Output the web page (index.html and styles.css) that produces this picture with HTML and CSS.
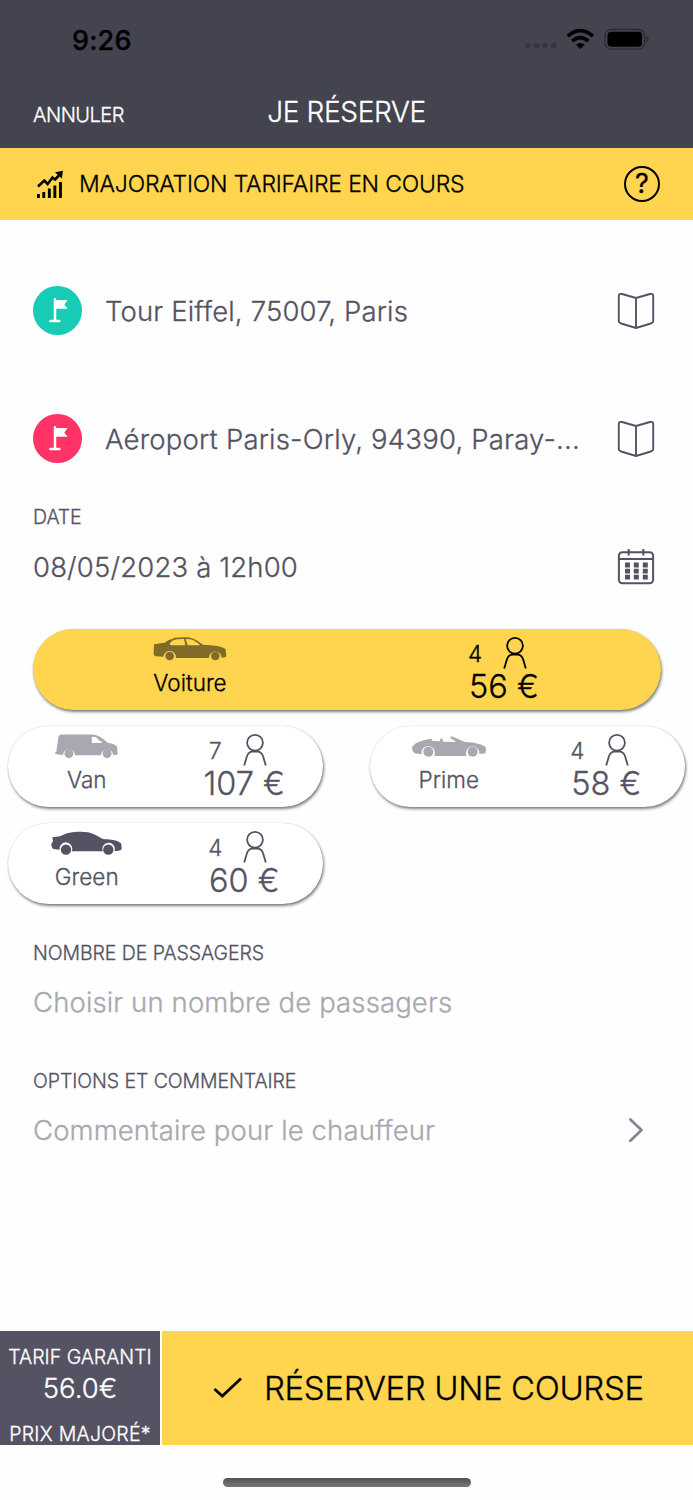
FILE: index.html
```html
<!DOCTYPE html>
<html lang="fr">
<head>
<meta charset="utf-8">
<title>Je réserve</title>
<link rel="stylesheet" href="styles.css">
</head>
<body>
<svg class="defs" width="0" height="0" aria-hidden="true">
  <symbol id="flag" viewBox="0 0 49 49"><path d="M22 13.200V35M17.300 34.900h9" stroke="#fff" stroke-width="2.500" stroke-linecap="round" fill="none"/><path d="M21 14h13.600l-3.300 4.400 3.300 4.400H21z" fill="#fff"/></symbol>
  <symbol id="book" viewBox="0 0 38 38"><path d="M19 6 5 2Q1.800 1.200 1.800 4.200V28.800Q1.800 30.900 4.200 31.500L19 36 33.800 31.500Q36.200 30.900 36.200 28.800V4.200Q36.200 1.200 33 2ZM19 6V36" fill="none" stroke="currentColor" stroke-width="1.900" stroke-linejoin="round"/></symbol>
  <symbol id="person" viewBox="0 0 24 32"><g fill="none" stroke="currentColor" stroke-width="1.800"><circle cx="12" cy="8.800" r="7.900"/><path d="M1.200 31.500 3.700 23Q5.300 17.700 9.500 17.700H14.500Q18.700 17.700 20.300 23L22.800 31.500"/></g></symbol>
</svg>
<div class="screen">
  <header class="top">
    <div class="status">
      <span class="time">9:26</span>
      <svg width="126" height="24" viewBox="0 0 126 24">
        <g fill="#363541"><rect x="1" y="15" width="5.500" height="5.500" rx="1.800"/><rect x="9.700" y="15" width="5.500" height="5.500" rx="1.800"/><rect x="18.300" y="15" width="5.500" height="5.500" rx="1.800"/><rect x="27" y="15" width="5.500" height="5.500" rx="1.800"/></g>
        <g fill="none" stroke="#000" stroke-width="3.700"><path d="M43.700 8.200Q56.300-3 68.900 8.200"/><path d="M48.200 13.200Q56.300 6 64.400 13.200"/></g>
        <path d="M52 16.800Q56.300 13.200 60.600 16.800L56.300 21Z"/>
        <rect x="81" y="1.500" width="39.500" height="19.600" rx="6" fill="none" stroke="#2c2b34" stroke-width="1.300"/>
        <rect x="83.500" y="3.800" width="34.600" height="15" rx="3.800"/>
        <path d="M122.300 8Q125 9 124.500 11.500 124.500 13.500 122.300 14.500Z" fill="#2c2b34"/>
      </svg>
    </div>
    <div class="nav"><span class="cancel">ANNULER</span><span class="title">JE RÉSERVE</span></div>
  </header>
  <div class="banner">
    <svg width="28" height="28" viewBox="0 0 28 28"><path d="M1 24h2.900v4H1zM6.300 22h2.900v6H6.300zM11.900 18.500h2.900V28h-2.900zM17.400 15.500h2.900V28h-2.900zM23 12h2.900v16H23z"/><path d="M2 16.500 8.300 10.500 11.600 14 16.500 7.500 19 9.500 24 4.500" fill="none" stroke="#000" stroke-width="2.600"/><path d="M19 2.200 27 .8 25.800 8.500Z"/></svg>
    <span class="banner-text">MAJORATION TARIFAIRE EN COURS</span>
    <span class="help">?</span>
  </div>
  <main>
    <div class="row address"><span class="dot pickup"><svg width="49" height="49"><use href="#flag"/></svg></span><span class="value">Tour Eiffel, 75007, Paris</span><svg class="end" width="38" height="38"><use href="#book"/></svg></div>
    <div class="row address"><span class="dot dropoff"><svg width="49" height="49"><use href="#flag"/></svg></span><span class="value long">Aéroport Paris-Orly, 94390, Paray-...</span><svg class="end" width="38" height="38"><use href="#book"/></svg></div>
    <section class="field">
      <div class="label">DATE</div>
      <div class="row"><span class="value">08/05/2023 à 12h00</span>
        <svg class="end" width="38" height="38" viewBox="0 0 38 38"><g fill="none" stroke="currentColor" stroke-width="2"><rect x="1.900" y="4.300" width="34.200" height="31" rx="3.500"/><path d="M2 11H36M11.700 1V7.500M26.300 1V7.500"/></g><path d="M8 14.600h5v4.800H8zM16.800 14.600h5v4.800h-5zM25.800 14.600h5v4.800h-5zM8 20.700h5v4.800H8zM16.800 20.700h5v4.800h-5zM25.800 20.700h5v4.800h-5zM8 26.800h5v4.800H8zM16.800 26.800h5v4.800h-5zM25.800 26.800h5v4.800h-5z" fill="currentColor"/></svg>
      </div>
    </section>
    <div class="cars">
      <article class="car selected">
        <div class="model"><svg width="74" height="24" viewBox="0 0 222 72" fill="#806b28"><path fill-rule="evenodd" d="M3 22 34 17Q48 7 60 5L63 2Q90 0 105 1C122 3 137 14 150 23 190 25 212 29 218 37L220 58Q218 62 206 62A19 19 0 1 0 168 63H69A19 19 0 1 0 31 59L8 58Q0 55 2 45ZM50 23Q53 10 72 7L93 6 97 25 58 25ZM98 6 112 7Q128 11 141 25H104Z"/><circle cx="50" cy="57" r="13"/><circle cx="187" cy="57" r="13"/></svg><span class="name">Voiture</span></div>
        <div class="offer"><div class="seats"><span>4</span><svg width="24" height="32"><use href="#person"/></svg></div><span class="price">56 €</span></div>
      </article>
      <article class="car">
        <div class="model"><svg width="63" height="24" viewBox="0 0 190 72" fill="#a9a8b1"><path fill-rule="evenodd" d="M10 10Q12 1 20 1H112C131 1 142 12 159 26Q184 31 187 38L189 61Q187 64 175 63A18 18 0 1 0 139 64H60A18 18 0 1 0 24 63L1 60V53H4ZM111 8V27H141V22H136L123 9Z"/><circle cx="42" cy="58.500" r="13.500"/><circle cx="157" cy="58.500" r="13.500"/></svg><span class="name">Van</span></div>
        <div class="offer"><div class="seats"><span>7</span><svg width="24" height="32"><use href="#person"/></svg></div><span class="price">107 €</span></div>
      </article>
      <article class="car">
        <div class="model"><svg width="75" height="24" viewBox="-1 -6 225 72" fill="#a9a8b1"><path d="M2 36Q5 17 60 8L63 9 61 14 85 16 88 7 94 9 95 17 135 18 117 6Q116 0 124 2L161 18C190 19 216 25 223 34Q225 44 222 52L204 54A20 20 0 1 0 166 60H68A20 20 0 1 0 31 55L10 52Q2 46 2 36Z"/><circle cx="51" cy="47" r="15"/><circle cx="184" cy="47" r="15"/></svg><span class="name">Prime</span></div>
        <div class="offer"><div class="seats"><span>4</span><svg width="24" height="32"><use href="#person"/></svg></div><span class="price">58 €</span></div>
      </article>
      <article class="car">
        <div class="model"><svg width="71" height="24" viewBox="0 -2 213 72" fill="#555363"><path d="M4 17 27 14C45 3 65 0 90 0 123 0 134 10 155 22 186 23 208 29 211 37L212 52Q208 58 191 58A19 19 0 1 0 155 59H62A19 19 0 1 0 26 54L7 52Q0 46 1 37L6 28Z"/><circle cx="45" cy="54" r="15.500"/><circle cx="172" cy="54" r="15.500"/></svg><span class="name">Green</span></div>
        <div class="offer"><div class="seats"><span>4</span><svg width="24" height="32"><use href="#person"/></svg></div><span class="price">60 €</span></div>
      </article>
    </div>
    <section class="field lower">
      <div class="label">NOMBRE DE PASSAGERS</div>
      <div class="row"><span class="value placeholder">Choisir un nombre de passagers</span></div>
    </section>
    <section class="field lower">
      <div class="label">OPTIONS ET COMMENTAIRE</div>
      <div class="row"><span class="value placeholder">Commentaire pour le chauffeur</span><svg class="end" width="38" height="38" viewBox="0 0 38 38"><path d="M13.300 8.500 24.500 19 13.300 29.800" fill="none" stroke="#858491" stroke-width="2.700" stroke-linecap="round" stroke-linejoin="round"/></svg></div>
    </section>
  </main>
  <footer>
    <div class="actions">
      <div class="fare"><span class="guaranteed">TARIF GARANTI</span><span class="amount">56.0€</span><span class="raised">PRIX MAJORÉ*</span></div>
      <div class="book"><svg width="30" height="22" viewBox="0 0 30 22"><path d="M1.500 12 9.300 19 28 1.500" fill="none" stroke="#000" stroke-width="2.800"/></svg><span class="book-text">RÉSERVER UNE COURSE</span></div>
    </div>
    <div class="home"></div>
  </footer>
</div>
</body>
</html>
```
FILE: styles.css
```css
* { box-sizing: border-box; }
body { margin: 0; font-family: Inter, "Liberation Sans", sans-serif; font-weight: 300; color: #555363; background: #fefefe; -webkit-text-stroke: 0.3px; }
.defs { display: block; }
svg { display: block; flex: none; }
span { white-space: nowrap; }
.screen { width: 693px; height: 1500px; display: flex; flex-direction: column; overflow: hidden; }
.top { height: 148px; background: #444350; color: #fff; }
.status { height: 80px; display: flex; align-items: center; justify-content: space-between; padding: 0 43px 0 72px; }
.time { color: #000; font-size: 27px; font-weight: 500; letter-spacing: 0.2px; }
.nav { height: 64px; display: grid; grid-template-columns: 1fr auto 1fr; align-items: center; padding-left: 33px; padding-right: 33px; }
.cancel { font-size: 20px; padding-top: 6px; letter-spacing: -0.5px; }
.title { font-size: 28px; letter-spacing: -0.35px; }
.banner { height: 72px; background: #ffd54f; color: #000; display: flex; align-items: center; padding: 0 33px 0 36px; }
.banner-text { margin-left: 15px; font-size: 23px; letter-spacing: -0.2px; }
.help { margin-left: auto; width: 36px; height: 36px; border: 2px solid #000; border-radius: 50%; font-size: 27px; font-weight: 400; line-height: 32px; text-align: center; }
main { flex: 1; padding-top: 27px; }
.row { height: 72px; display: flex; align-items: center; padding: 0 38px 0 33px; }
.address { height: 128px; }
.dot { border-radius: 50%; margin-right: 23px; margin-bottom: 1px; }
.pickup { background: #17cbb5; }
.dropoff { background: #ff3366; }
.end { margin-left: auto; }
.value { font-size: 27.5px; letter-spacing: 0.16px; }
.long { letter-spacing: 0.2px; }
.placeholder { color: #a9a8b1; letter-spacing: 0.12px; }
.field { height: 128px; }
.label { height: 28px; line-height: 29px; padding-left: 33px; font-size: 19.5px; letter-spacing: -0.07px; }
.lower .label { height: 27px; line-height: 28px; }
.cars { display: grid; grid-template-columns: 315px 315px; gap: 16px 47px; padding: 0 8px; margin: -2px 0 35px; }
.car { height: 81px; border-radius: 41px; display: grid; grid-template-columns: 1fr 1fr; background: #fff; box-shadow: 1px 2px 3px rgba(0,0,0,.5), 0 0 1px rgba(0,0,0,.2); }
.selected { grid-column: 1 / -1; margin: 0 24px 0 25px; background: #ffd54f; color: #000; }
.model, .offer { display: flex; flex-direction: column; align-items: center; padding-top: 8px; }
.name { font-size: 22.5px; line-height: 28px; margin-top: 8px; }
.seats { display: flex; align-items: center; gap: 21px; height: 32px; padding-right: 13px; font-size: 22.5px; }
.price { font-size: 32.5px; line-height: 35px; }
.actions { height: 114px; display: flex; gap: 2px; }
.fare { width: 160px; background: #555363; color: #fff; display: flex; flex-direction: column; align-items: center; padding-top: 13px; }
.guaranteed { font-size: 19.5px; line-height: 26px; }
.raised { font-size: 19.5px; line-height: 20px; letter-spacing: 0.28px; }
.amount { font-size: 27.5px; line-height: 36px; margin-bottom: 18px; }
.book { flex: 1; background: #ffd54f; color: #000; display: flex; align-items: center; padding-left: 51px; }
.book-text { font-size: 33px; margin-left: 21px; letter-spacing: -0.36px; }
.home { width: 248px; height: 9px; border-radius: 5px; background: linear-gradient(#505451, #777); margin: 33px auto 13px; }
```
